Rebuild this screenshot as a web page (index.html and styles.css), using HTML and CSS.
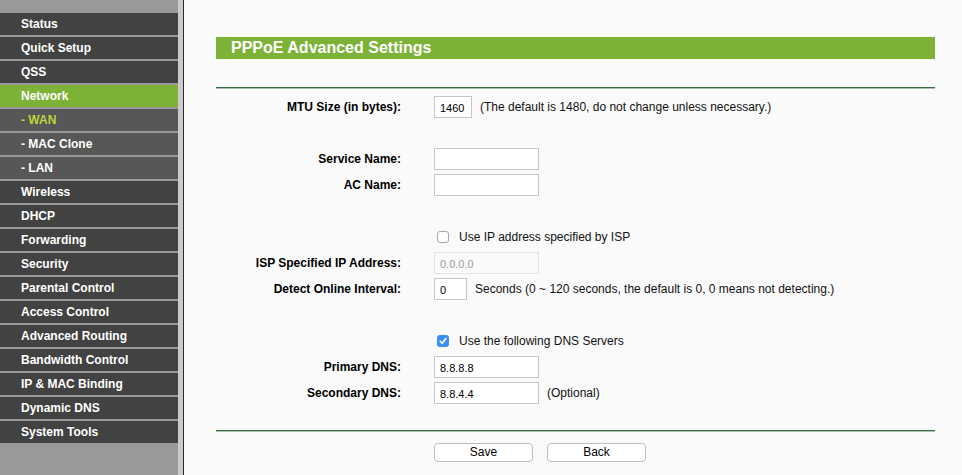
FILE: index.html
```html
<!DOCTYPE html>
<html>
<head>
<meta charset="utf-8">
<link rel="stylesheet" href="styles.css">
</head>
<body>
<div class="sidebar">
  <ul class="menu">
    <li class="item">Status</li>
    <li class="item">Quick Setup</li>
    <li class="item">QSS</li>
    <li class="item active">Network</li>
    <li class="item sub current">- WAN</li>
    <li class="item sub">- MAC Clone</li>
    <li class="item sub">- LAN</li>
    <li class="item">Wireless</li>
    <li class="item">DHCP</li>
    <li class="item">Forwarding</li>
    <li class="item">Security</li>
    <li class="item">Parental Control</li>
    <li class="item">Access Control</li>
    <li class="item">Advanced Routing</li>
    <li class="item">Bandwidth Control</li>
    <li class="item">IP &amp; MAC Binding</li>
    <li class="item">Dynamic DNS</li>
    <li class="item">System Tools</li>
  </ul>
</div>
<div class="main">
  <div class="panel">
    <div class="title">PPPoE Advanced Settings</div>
    <div class="rule"></div>
    <div class="form">
      <div class="row">
        <div class="label">MTU Size (in bytes):</div>
        <div class="field"><input class="input w-mtu" type="text" value="1460"><span class="note">(The default is 1480, do not change unless necessary.)</span></div>
      </div>
      <div class="row blank"></div>
      <div class="row">
        <div class="label">Service Name:</div>
        <div class="field"><input class="input w-long" type="text" value=""></div>
      </div>
      <div class="row">
        <div class="label">AC Name:</div>
        <div class="field"><input class="input w-long" type="text" value=""></div>
      </div>
      <div class="row blank"></div>
      <div class="row">
        <div class="label"></div>
        <div class="field"><span class="check"></span><span class="check-text">Use IP address specified by ISP</span></div>
      </div>
      <div class="row">
        <div class="label">ISP Specified IP Address:</div>
        <div class="field"><input class="input w-long disabled" type="text" value="0.0.0.0" disabled></div>
      </div>
      <div class="row">
        <div class="label">Detect Online Interval:</div>
        <div class="field"><input class="input w-short" type="text" value="0"><span class="note">Seconds (0 ~ 120 seconds, the default is 0, 0 means not detecting.)</span></div>
      </div>
      <div class="row blank"></div>
      <div class="row">
        <div class="label"></div>
        <div class="field"><span class="check checked"><svg width="12" height="12" viewBox="0 0 12 12"><path d="M3.2 6.3 L5.1 8.3 L8.9 3.6" fill="none" stroke="#fff" stroke-width="1.6" stroke-linecap="round" stroke-linejoin="round"/></svg></span><span class="check-text">Use the following DNS Servers</span></div>
      </div>
      <div class="row">
        <div class="label">Primary DNS:</div>
        <div class="field"><input class="input w-long" type="text" value="8.8.8.8"></div>
      </div>
      <div class="row">
        <div class="label">Secondary DNS:</div>
        <div class="field"><input class="input w-long" type="text" value="8.8.4.4"><span class="note">(Optional)</span></div>
      </div>
    </div>
    <div class="rule bottom"></div>
    <div class="buttons">
      <button class="btn">Save</button>
      <button class="btn">Back</button>
    </div>
  </div>
</div>
</body>
</html>
```

FILE: styles.css
```css
html, body {
  margin: 0;
  padding: 0;
  height: 100%;
}
body {
  display: flex;
  background: #fafafa;
  font-family: "Liberation Sans", Arial, Helvetica, sans-serif;
  font-size: 12px;
  color: #000;
  overflow: hidden;
}
.sidebar {
  width: 178px;
  flex: 0 0 178px;
  background: #999999;
  border-right: 5px solid #cbcbcb;
  box-shadow: 1px 0 0 #2a2a2a;
  height: 475px;
  padding-top: 13px;
  box-sizing: content-box;
}
.menu {
  list-style: none;
  margin: 0;
  padding: 0;
}
.item {
  height: 22px;
  line-height: 22px;
  margin-bottom: 2px;
  background: #424242;
  color: #fff;
  font-weight: bold;
  font-size: 12px;
  padding-left: 21px;
}
.item.active {
  background: #7cb236;
}
.item.sub {
  background: #575757;
}
.item.current {
  color: #b7d63a;
}
.main {
  flex: 1;
  margin-left: 1px;
  padding-left: 32px;
  padding-top: 37px;
}
.panel {
  width: 719px;
}
.title {
  height: 22px;
  line-height: 22px;
  background: #7cb236;
  color: #fff;
  font-weight: bold;
  font-size: 16px;
  padding-left: 15px;
}
.rule {
  margin-top: 28px;
  height: 1px;
  background: #3d6b48;
  border-bottom: 1px solid #a9c0ab;
}
.rule.bottom {
  margin-top: 24px;
}
.form {
  padding-top: 5px;
}
.row {
  display: flex;
  align-items: center;
  height: 26px;
}
.label {
  width: 185px;
  flex: 0 0 185px;
  text-align: right;
  font-weight: bold;
  margin-right: 33px;
  white-space: nowrap;
}
.field {
  display: flex;
  align-items: center;
  white-space: nowrap;
}
.input {
  box-sizing: border-box;
  height: 22px;
  border: 1px solid #c6c6c6;
  background: #fff;
  font-family: "Liberation Sans", Arial, sans-serif;
  font-size: 11px;
  padding: 2px 0 0 5px;
  margin: 0;
  color: #000;
  outline: none;
}
.input.disabled {
  color: #a0a0a0;
  background: #fafafa;
  border-color: #e2e2e2;
}
.w-mtu { width: 38px; }
.w-long { width: 105px; }
.w-short { width: 33px; }
.note {
  margin-left: 8px;
  color: #111;
}
.check {
  display: inline-flex;
  box-sizing: border-box;
  width: 12px;
  height: 12px;
  margin-left: 3px;
  margin-top: -1px;
  border: 1px solid #a8a8a8;
  border-radius: 3px;
  background: #fff;
}
.check.checked {
  border: none;
  background: #3b8ff5;
}
.check-text {
  margin-left: 10px;
  color: #111;
}
.buttons {
  display: flex;
  gap: 14px;
  padding-left: 218px;
  padding-top: 11px;
}
.btn {
  width: 99px;
  height: 19px;
  box-sizing: border-box;
  border: 1px solid #bdbdbd;
  border-radius: 4px;
  background: #fff;
  font-family: "Liberation Sans", Arial, sans-serif;
  font-size: 12px;
  color: #000;
  padding: 0;
  line-height: 17px;
}
```
